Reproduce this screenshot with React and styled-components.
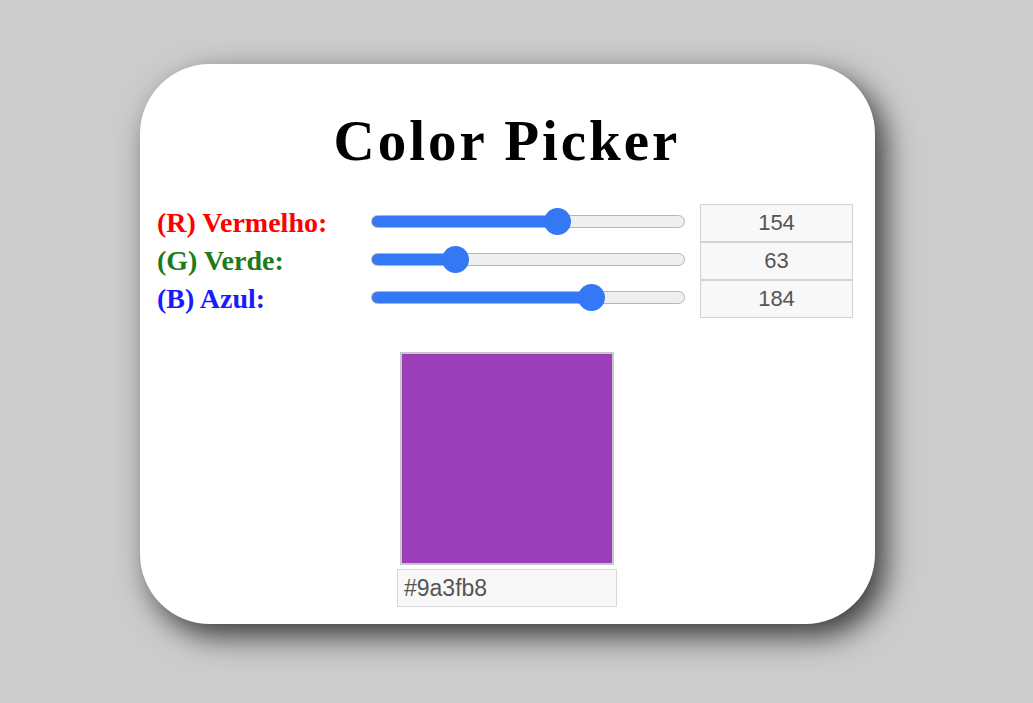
import React, { useState } from 'react'
import styled, { createGlobalStyle } from 'styled-components'

const GlobalStyle = createGlobalStyle`
    body {
        margin: 0;
        background: #cccccc;
        font-family: "Liberation Serif", "Times New Roman", serif;
    }
`

function toHex(r, g, b) {
    return '#' + [r, g, b].map((n) => n.toString(16).padStart(2, '0')).join('')
}

const channels = [
    { key: 'r', label: '(R) Vermelho:', color: '#ff0000' },
    { key: 'g', label: '(G) Verde:', color: '#217a1a' },
    { key: 'b', label: '(B) Azul:', color: '#1a1aff' },
]

function App() {
    const [rgb, setRgb] = useState({ r: 154, g: 63, b: 184 })
    const hex = toHex(rgb.r, rgb.g, rgb.b)

    const change = (key, value) => {
        let n = parseInt(value, 10)
        if (isNaN(n)) n = 0
        n = Math.max(0, Math.min(255, n))
        setRgb({ ...rgb, [key]: n })
    }

    return (
        <Page>
            <GlobalStyle />
            <Card>
                <Title>Color Picker</Title>
                <Controls>
                    {channels.map((c) => (
                        <Row key={c.key}>
                            <Label $color={c.color}>{c.label}</Label>
                            <Slider
                                type='range'
                                min='0'
                                max='255'
                                value={rgb[c.key]}
                                $ratio={rgb[c.key] / 255}
                                onChange={(e) => change(c.key, e.target.value)}
                            />
                            <NumberBox
                                type='text'
                                value={rgb[c.key]}
                                onChange={(e) => change(c.key, e.target.value)}
                            />
                        </Row>
                    ))}
                </Controls>
                <Preview>
                    <Swatch style={{ background: hex }} />
                    <HexBox type='text' value={hex} readOnly />
                </Preview>
            </Card>
        </Page>
    )
}

export default App

const Page = styled.div`
    min-height: 100vh;
    box-sizing: border-box;
    display: flex;
    align-items: center;
    justify-content: center;
    padding: 0 18px 15px 0;
`

const Card = styled.div`
    width: 735px;
    height: 560px;
    box-sizing: border-box;
    background: #ffffff;
    border-radius: 70px;
    box-shadow: 10px 12px 30px rgba(0, 0, 0, 0.72);
    padding: 45px 22px 0 17px;
    display: flex;
    flex-direction: column;
`

const Title = styled.h1`
    margin: 0 0 31px;
    text-align: center;
    font-family: "Liberation Serif", "Times New Roman", serif;
    font-weight: bold;
    font-size: 57px;
    line-height: 64px;
    letter-spacing: 3px;
    color: #000;
    padding-left: 4px;
`

const Controls = styled.div`
    display: flex;
    flex-direction: column;
`

const Row = styled.div`
    display: grid;
    grid-template-columns: 199px 314px 153px;
    column-gap: 15px;
    align-items: center;
    height: 38px;
`

const Label = styled.span`
    font-family: "Liberation Serif", "Times New Roman", serif;
    font-weight: bold;
    font-size: 28px;
    color: ${(p) => p.$color};
    white-space: nowrap;
`

const Slider = styled.input.attrs((p) => ({
    style: { '--fill': `calc(13px + (100% - 26px) * ${p.$ratio})` },
}))`
    -webkit-appearance: none;
    appearance: none;
    display: block;
    width: 314px;
    height: 28px;
    margin: 0 0 3px;
    background: transparent;
    cursor: pointer;

    &::-webkit-slider-runnable-track {
        height: 13px;
        box-sizing: border-box;
        border-radius: 7px;
        border: 1px solid #b5b5b5;
        background: linear-gradient(to right, #3478f6 0, #3478f6 var(--fill), #efefef var(--fill), #efefef 100%);
    }

    &::-webkit-slider-thumb {
        -webkit-appearance: none;
        width: 27px;
        height: 27px;
        border-radius: 50%;
        background: #3478f6;
        border: none;
        margin-top: -8px;
    }
`

const NumberBox = styled.input`
    width: 153px;
    height: 38px;
    box-sizing: border-box;
    border: 1px solid #d3d3d3;
    background: #f8f8f8;
    font-family: "Liberation Sans", Arial, sans-serif;
    font-size: 22px;
    color: #555;
    text-align: center;
    padding: 0;
    outline: none;
`

const Preview = styled.div`
    margin-top: 34px;
    padding-left: 4px;
    display: flex;
    flex-direction: column;
    align-items: center;
    gap: 4px;
`

const Swatch = styled.div`
    width: 214px;
    height: 213px;
    box-sizing: border-box;
    border: 2px solid #c8c8c8;
`

const HexBox = styled.input`
    width: 220px;
    height: 38px;
    box-sizing: border-box;
    border: 1px solid #d8d8d8;
    background: #f8f8f8;
    font-family: "Liberation Sans", Arial, sans-serif;
    font-size: 23px;
    color: #555;
    padding: 0 6px;
    outline: none;
`
